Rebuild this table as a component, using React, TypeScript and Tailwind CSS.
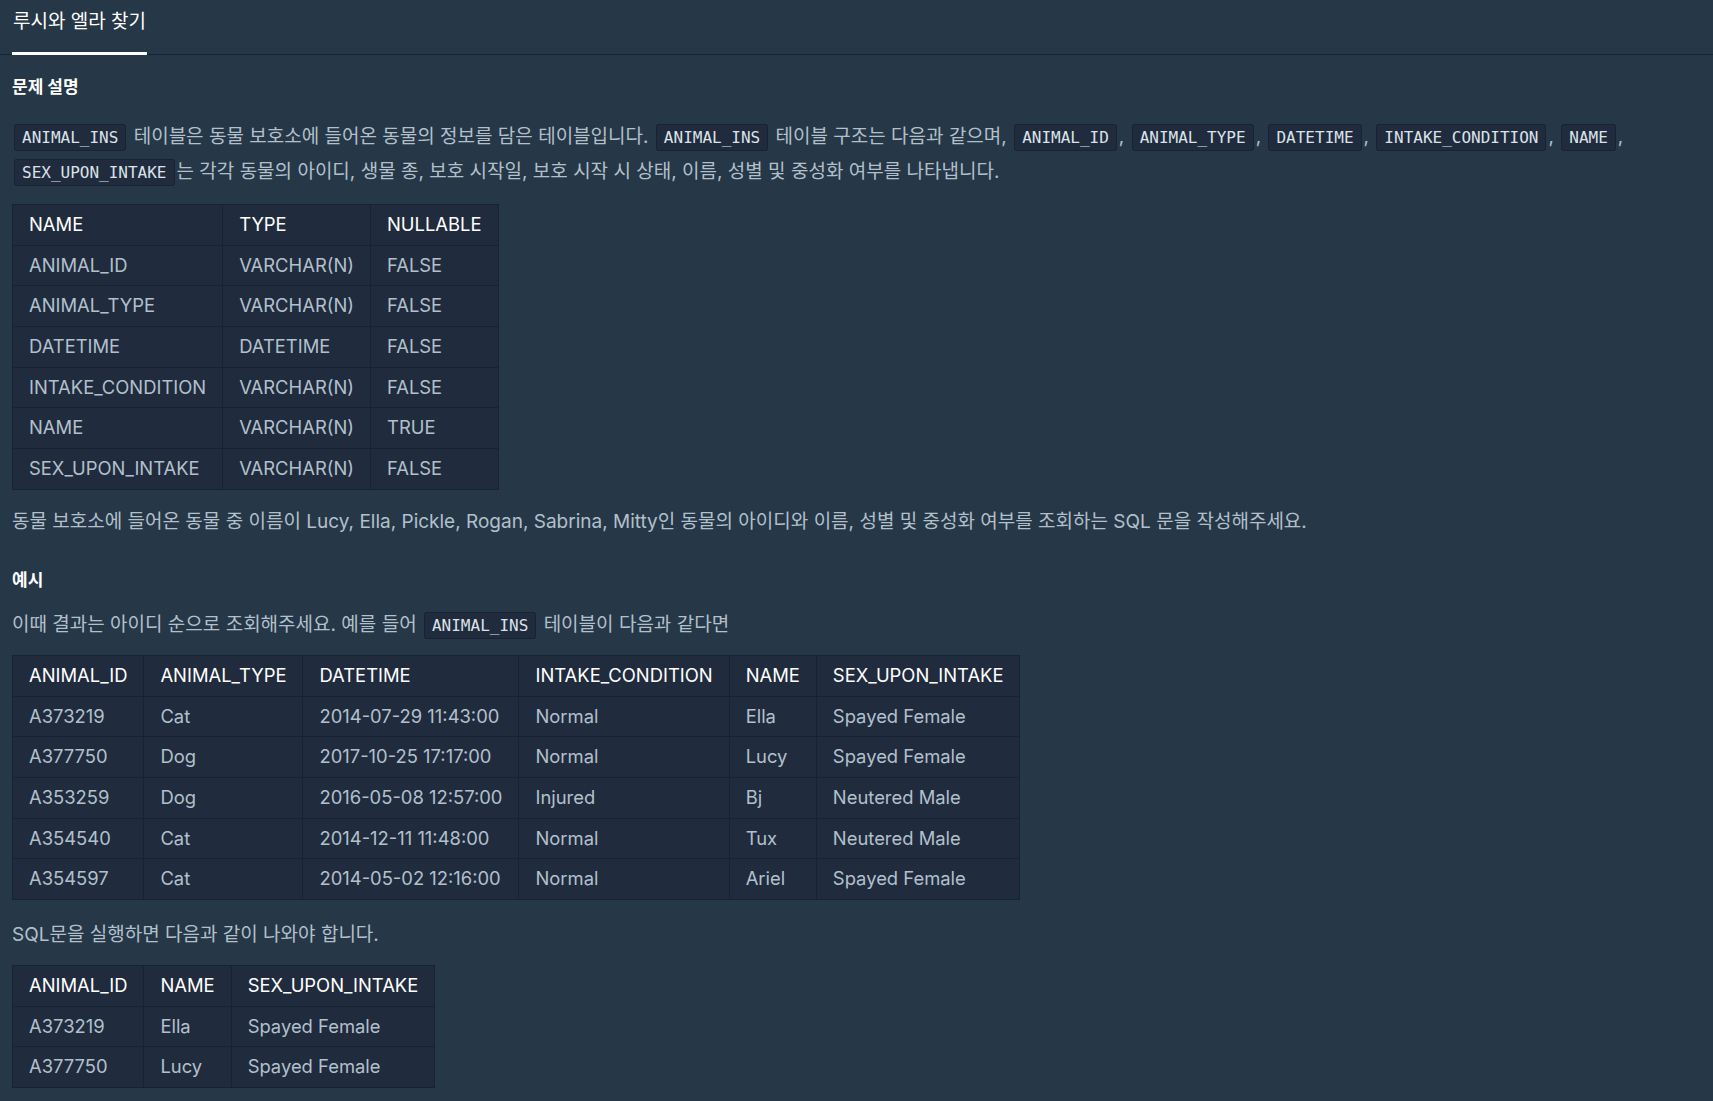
const sans = "font-['Inter','Noto_Sans_CJK_KR',sans-serif]";

function Code({ children }: { children: string }) {
  return (
    <code className="mx-[2px] rounded-[3px] border border-[#172334] bg-[#202b3d] px-[7px] py-[3px] font-['DejaVu_Sans_Mono',monospace] text-[16px] text-[#dbe3ea]">
      {children}
    </code>
  );
}

function DataTable({ head, rows }: { head: string[]; rows: string[][] }) {
  return (
    <table className="border-collapse border border-[#172334] bg-[#202b3d] text-[18.4px]">
      <thead>
        <tr>
          {head.map((h) => (
            <th key={h} className="h-[40.7px] border border-[#172334] px-4 text-left font-normal text-white">
              {h}
            </th>
          ))}
        </tr>
      </thead>
      <tbody>
        {rows.map((r, i) => (
          <tr key={i}>
            {r.map((c, j) => (
              <td key={j} className="h-[40.7px] border border-[#172334] px-4 text-[#b2c0cc]">
                {c}
              </td>
            ))}
          </tr>
        ))}
      </tbody>
    </table>
  );
}

const schema = [
  ['ANIMAL_ID', 'VARCHAR(N)', 'FALSE'],
  ['ANIMAL_TYPE', 'VARCHAR(N)', 'FALSE'],
  ['DATETIME', 'DATETIME', 'FALSE'],
  ['INTAKE_CONDITION', 'VARCHAR(N)', 'FALSE'],
  ['NAME', 'VARCHAR(N)', 'TRUE'],
  ['SEX_UPON_INTAKE', 'VARCHAR(N)', 'FALSE'],
];

const sample = [
  ['A373219', 'Cat', '2014-07-29 11:43:00', 'Normal', 'Ella', 'Spayed Female'],
  ['A377750', 'Dog', '2017-10-25 17:17:00', 'Normal', 'Lucy', 'Spayed Female'],
  ['A353259', 'Dog', '2016-05-08 12:57:00', 'Injured', 'Bj', 'Neutered Male'],
  ['A354540', 'Cat', '2014-12-11 11:48:00', 'Normal', 'Tux', 'Neutered Male'],
  ['A354597', 'Cat', '2014-05-02 12:16:00', 'Normal', 'Ariel', 'Spayed Female'],
];

const result = [
  ['A373219', 'Ella', 'Spayed Female'],
  ['A377750', 'Lucy', 'Spayed Female'],
];

export default function App() {
  return (
    <div className={`min-h-screen bg-[#263747] ${sans}`}>
      {/* tab bar */}
      <div className="flex h-[55px] border-b border-[#172334] px-3">
        <div className="-mb-px h-[55px] border-b-[3px] border-white px-[1px] pt-[8px] text-[19px] leading-[28px] text-white">
          루시와 엘라 찾기
        </div>
      </div>

      <div className="px-3 pb-4">
        <h5 className="mt-[20px] text-[17px] font-bold leading-[24px] text-white">문제 설명</h5>

        <p className="mt-[21px] text-[19px] leading-[34px] text-[#b2c0cc]">
          <Code>ANIMAL_INS</Code> 테이블은 동물 보호소에 들어온 동물의 정보를 담은 테이블입니다. <Code>ANIMAL_INS</Code> 테이블 구조는 다음과 같으며, <Code>ANIMAL_ID</Code>, <Code>ANIMAL_TYPE</Code>, <Code>DATETIME</Code>, <Code>INTAKE_CONDITION</Code>, <Code>NAME</Code>, <Code>SEX_UPON_INTAKE</Code>는 각각 동물의 아이디, 생물 종, 보호 시작일, 보호 시작 시 상태, 이름, 성별 및 중성화 여부를 나타냅니다.
        </p>

        <div className="mt-[14px]">
          <DataTable head={['NAME', 'TYPE', 'NULLABLE']} rows={schema} />
        </div>

        <p className="mt-[18px] text-[19px] leading-[28px] text-[#b2c0cc]">
          동물 보호소에 들어온 동물 중 이름이 Lucy, Ella, Pickle, Rogan, Sabrina, Mitty인 동물의 아이디와 이름, 성별 및 중성화 여부를 조회하는 SQL 문을 작성해주세요.
        </p>

        <h5 className="mt-[32px] text-[17px] font-bold leading-[24px] text-white">예시</h5>

        <p className="mt-[16px] text-[19px] leading-[34px] text-[#b2c0cc]">
          이때 결과는 아이디 순으로 조회해주세요. 예를 들어 <Code>ANIMAL_INS</Code> 테이블이 다음과 같다면
        </p>

        <div className="mt-[12px]">
          <DataTable
            head={['ANIMAL_ID', 'ANIMAL_TYPE', 'DATETIME', 'INTAKE_CONDITION', 'NAME', 'SEX_UPON_INTAKE']}
            rows={sample}
          />
        </div>

        <p className="mt-[21px] text-[19px] leading-[28px] text-[#b2c0cc]">SQL문을 실행하면 다음과 같이 나와야 합니다.</p>

        <div className="mt-[16px]">
          <DataTable head={['ANIMAL_ID', 'NAME', 'SEX_UPON_INTAKE']} rows={result} />
        </div>
      </div>
    </div>
  );
}
